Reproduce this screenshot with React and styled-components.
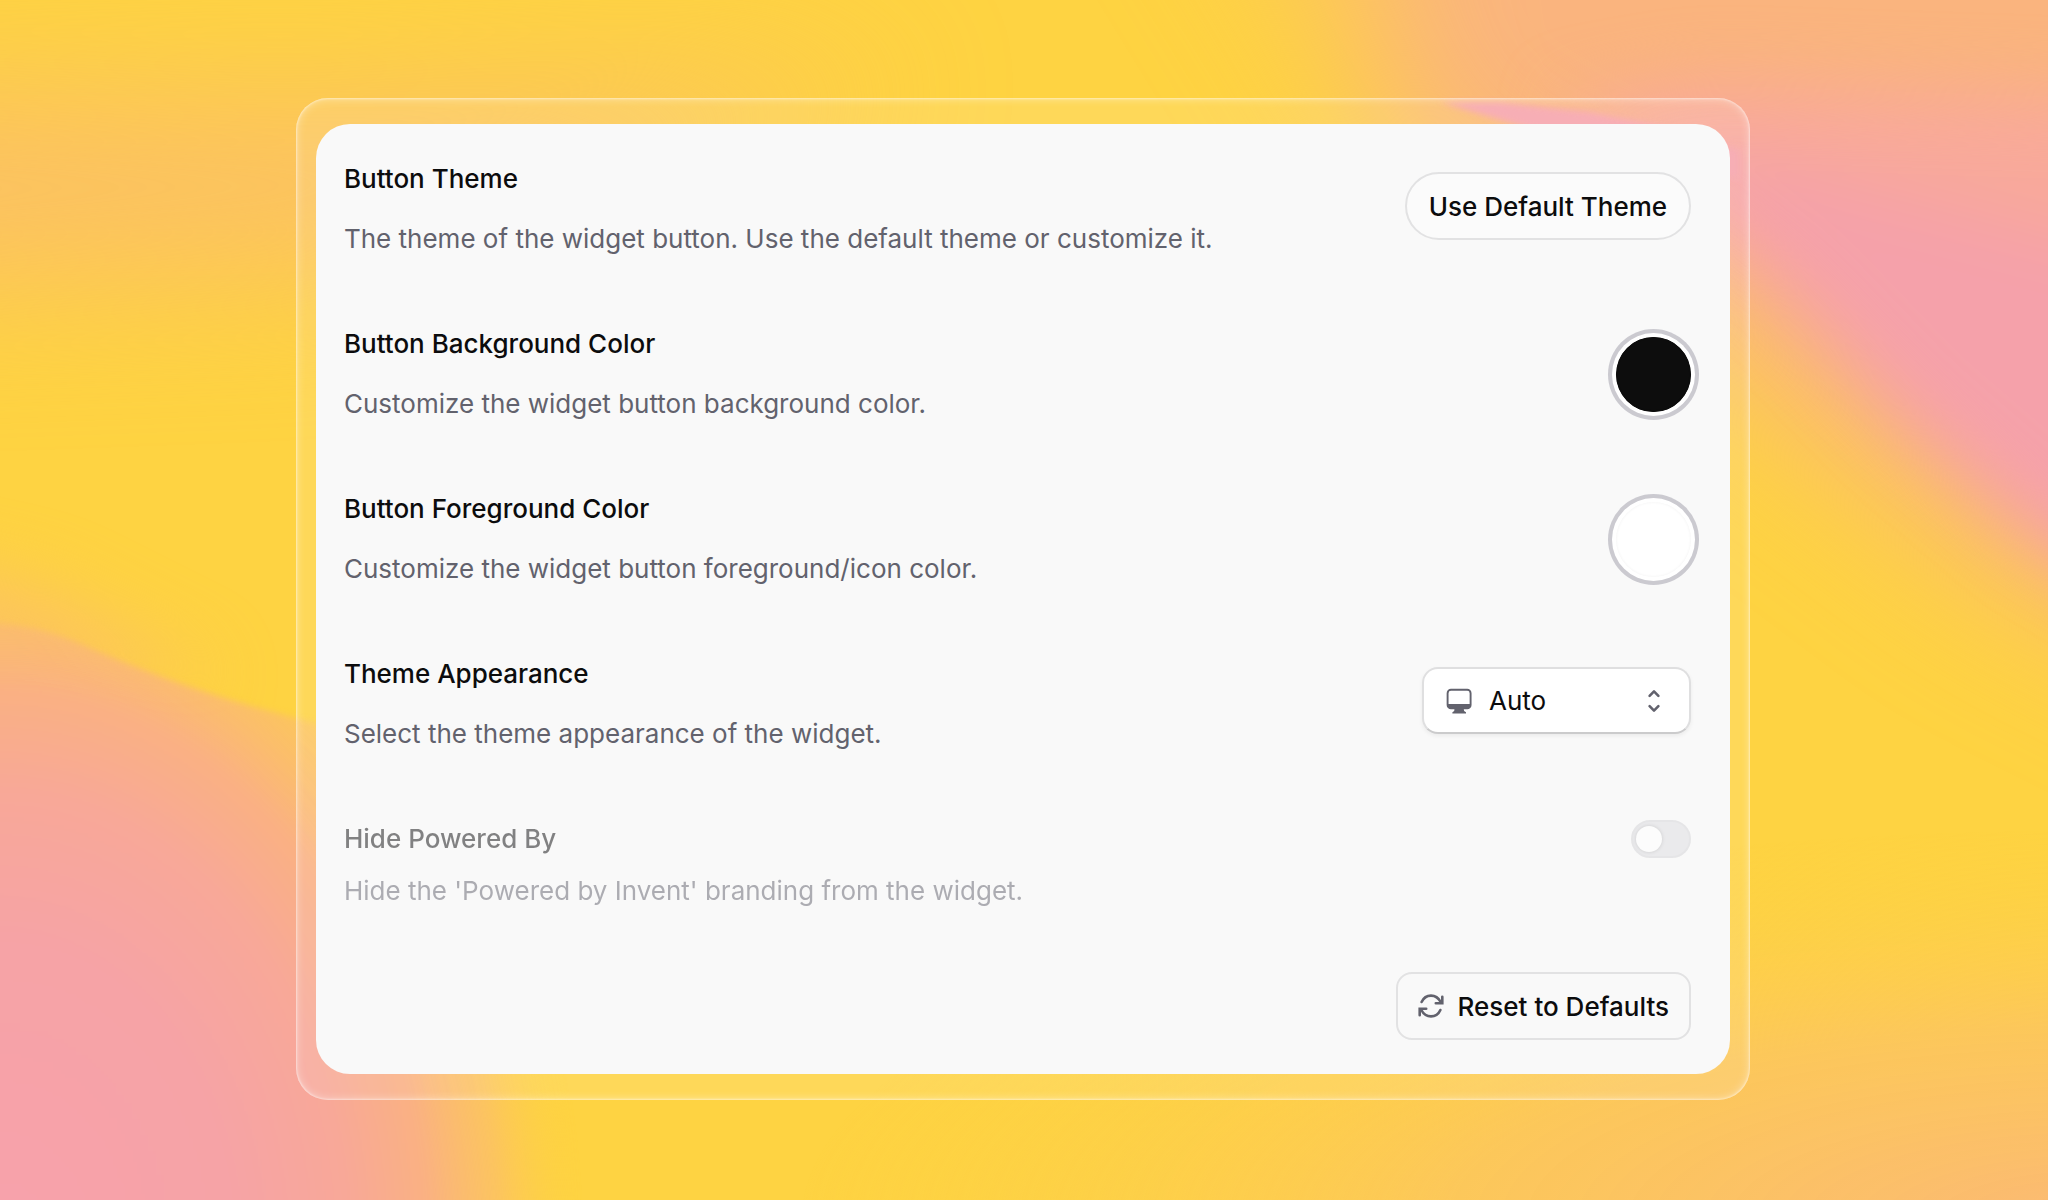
import React, { useState } from 'react';
import styled, { createGlobalStyle } from 'styled-components';

const GlobalStyle = createGlobalStyle`
  * {
    box-sizing: border-box;
  }

  body {
    margin: 0;
    font-family: Inter, 'Liberation Sans', sans-serif;
    color: #0c0c0d;
  }
`;

const Page = styled.main`
  position: relative;
  display: flex;
  align-items: center;
  justify-content: center;
  min-height: 100vh;
  padding: 24px 26px 26px 24px;
  overflow: hidden;
  background: #fed342;
`;

const Backdrop = styled.svg`
  position: absolute;
  inset: 0;
  width: 100%;
  height: 100%;
`;

const Frame = styled.div`
  position: relative;
  width: 71vw;
  min-width: 900px;
  padding: 26px 20px;
  border-radius: 32px;
  background: rgba(255, 255, 255, 0.12);
  box-shadow:
    inset 0 0 2px 1px rgba(255, 255, 255, 0.4),
    inset 0 0 8px 1px rgba(255, 255, 255, 0.4);
`;

const Card = styled.section`
  padding: 36px 39px 34px 28px;
  border-radius: 34px;
  background: #f9f9f9;
`;

const Settings = styled.div`
  display: flex;
  flex-direction: column;
  gap: 67px;
`;

const Row = styled.div`
  display: flex;
  align-items: flex-start;
  justify-content: space-between;
  gap: 24px;
`;

const RowText = styled.div`
  display: flex;
  flex-direction: column;
  gap: 22px;
`;

const Control = styled.div`
  flex-shrink: 0;
  padding-top: 12px;
`;

const Title = styled.label`
  font-size: 26px;
  font-weight: 500;
  line-height: 38px;
`;

const Description = styled.p`
  margin: 0;
  font-size: 26px;
  line-height: 38px;
  color: #62626d;
`;

const DisabledRow = styled.div`
  display: flex;
  flex-direction: column;
  gap: 14px;
  opacity: 0.5;
`;

const DisabledHeader = styled.div`
  display: flex;
  align-items: center;
  justify-content: space-between;
`;

const Button = styled.button`
  display: inline-flex;
  align-items: center;
  gap: 14px;
  height: 68px;
  padding: 0 ${props => (props.$pill ? '22px' : '20px')};
  border: 2px solid #e2e2e3;
  border-radius: ${props => (props.$pill ? '34px' : '16px')};
  background: ${props => (props.$pill ? '#fbfbfb' : '#f9f9f9')};
  color: inherit;
  font-family: inherit;
  font-size: 26px;
  font-weight: 500;
  cursor: pointer;
`;

const Swatch = styled.input`
  appearance: none;
  display: block;
  width: 75px;
  height: 75px;
  padding: 0;
  border: none;
  border-radius: 50%;
  background: ${props => props.value};
  box-shadow:
    inset 0 0 3px rgba(0, 0, 0, 0.06),
    0 0 0 4px #fff,
    0 0 0 8px #cbcad0;
  cursor: pointer;

  &::-webkit-color-swatch-wrapper {
    padding: 0;
  }

  &::-webkit-color-swatch {
    border: none;
    border-radius: 50%;
    box-shadow: inset 0 0 3px rgba(0, 0, 0, 0.06);
  }
`;

const SelectBox = styled.div`
  position: relative;
  display: flex;
  align-items: center;
`;

const Select = styled.select`
  appearance: none;
  width: 269px;
  height: 67px;
  padding: 0 64px 0 65px;
  border: 2px solid #dfdfe0;
  border-bottom-color: #cbcbcc;
  border-radius: 16px;
  background: #fff;
  box-shadow: 0 2px 4px rgba(0, 0, 0, 0.06);
  color: inherit;
  font-family: inherit;
  font-size: 26px;
`;

const SelectIcon = styled.svg`
  position: absolute;
  left: ${props => props.$left};
  right: ${props => props.$right};
  color: #62626d;
  pointer-events: none;
`;

const Switch = styled.input`
  appearance: none;
  display: flex;
  align-items: center;
  width: 60px;
  height: 38px;
  margin: 0;
  padding: 0 3px;
  border: 2px solid #d3d3d6;
  border-radius: 19px;
  background: #dcdce0;

  &::before {
    content: '';
    width: 26px;
    height: 26px;
    border-radius: 50%;
    background: #fff;
    box-shadow: 0 0 3px 1px rgba(0, 0, 0, 0.16);
  }

  &:checked::before {
    margin-left: auto;
  }
`;

const Footer = styled.div`
  display: flex;
  justify-content: flex-end;
  margin-top: 62px;
`;

const MonitorIcon = () => (
  <SelectIcon $left="24px" width="26" height="26" viewBox="0 0 26 26" fill="none" aria-hidden="true">
    <rect x="1.6" y="1.8" width="23" height="18.6" rx="3.4" stroke="currentColor" strokeWidth="1.9" />
    <path d="M1.6 16h23v1.200a3.200 3.200 0 0 1-3.200 3.200H4.800a3.200 3.200 0 0 1-3.200-3.200z" fill="currentColor" />
    <path d="M8.6 20h9l.5 3 1.9 1.2v1.4H6.4v-1.4l1.8-1.2z" fill="currentColor" />
  </SelectIcon>
);

const ChevronsIcon = () => (
  <SelectIcon $right="30px" width="14" height="24" viewBox="0 0 14 24" fill="none" aria-hidden="true">
    <path
      d="M2.6 6.8 7 2.4l4.4 4.4M2.6 17.2 7 21.6l4.4-4.4"
      stroke="currentColor"
      strokeWidth="2.6"
      strokeLinecap="round"
      strokeLinejoin="round"
    />
  </SelectIcon>
);

const RefreshIcon = () => (
  <svg width="26" height="24" viewBox="0 0 26 24" fill="none" stroke="#62626d" strokeWidth="2.6" strokeLinecap="round" aria-hidden="true">
    <path d="M3.6 8C5.4 4 8.8 1.6 13 1.6S20.600 4 22.700 8" />
    <path d="M24.300 2.800v6.400h-6.500" />
    <path d="M22.400 16c-1.800 4-5.200 6.400-9.400 6.400S5.400 20 3.300 16" />
    <path d="M1.700 21.200v-6.400h6.500" />
  </svg>
);

const Wallpaper = () => (
  <Backdrop viewBox="0 0 2048 1200" preserveAspectRatio="none" aria-hidden="true">
    <defs>
      <filter id="wide" x="-50%" y="-50%" width="200%" height="200%" colorInterpolationFilters="sRGB">
        <feGaussianBlur stdDeviation="70" />
      </filter>
      <filter id="mid" x="-50%" y="-50%" width="200%" height="200%" colorInterpolationFilters="sRGB">
        <feGaussianBlur stdDeviation="34" />
      </filter>
      <filter id="edge" x="-20%" y="-20%" width="140%" height="140%" colorInterpolationFilters="sRGB">
        <feGaussianBlur stdDeviation="3" />
      </filter>
      <radialGradient id="coral" gradientUnits="userSpaceOnUse" cx="0" cy="0" r="1" gradientTransform="translate(0 1250) scale(580 760)">
        <stop offset="0" stopColor="#f8a2ac" />
        <stop offset="0.4" stopColor="#f6a3a6" />
        <stop offset="0.6" stopColor="#f8a898" />
        <stop offset="0.74" stopColor="#fab182" />
        <stop offset="0.86" stopColor="#fbc067" stopOpacity="0.8" />
        <stop offset="1" stopColor="#fed342" stopOpacity="0" />
      </radialGradient>
      <radialGradient id="corner" gradientUnits="userSpaceOnUse" cx="0" cy="0" r="1" gradientTransform="translate(2100 1220) scale(1300 390)">
        <stop offset="0" stopColor="#fbb974" />
        <stop offset="0.5" stopColor="#fcc65d" stopOpacity="0.9" />
        <stop offset="1" stopColor="#fed342" stopOpacity="0" />
      </radialGradient>
    </defs>
    <g filter="url(#wide)">
      <path d="M-200 90 300 100 900 80 620 190 360 270-200 290z" fill="#fbc064" />
      <path d="M1180-200H1700V320L1400 160z" fill="#fcc45f" opacity="0.8" />
      <path d="M1380-200H2300V720L2000 570 1800 420 1640 300 1400 160z" fill="#fab47e" />
    </g>
    <rect x="700" y="800" width="1348" height="400" fill="url(#corner)" />
    <g filter="url(#mid)">
      <path d="M-100 560 40 590 220 680-100 680z" fill="#fcc35f" />
      <path d="M1560 110 1700 85 2150 100V600L2040 540 1900 420 1780 295 1650 190z" fill="#f8a99a" />
      <path d="M1640 150 1780 165 1900 195 2150 260V610L2040 535 1900 410 1780 275z" fill="#f5a1aa" />
    </g>
    <g filter="url(#edge)">
      <path d="M1440 102 1500 102 1590 112 1660 126 1740 150 1740 180 1600 150z" fill="#f6a3ab" />
      <path d="M-40 622C20 622 50 630 90 648 150 674 220 700 320 724L620 800V1260H-40z" fill="url(#coral)" />
    </g>
  </Backdrop>
);

const App = () => {
  const [background, setBackground] = useState('#0d0d0d');
  const [foreground, setForeground] = useState('#ffffff');
  const [appearance, setAppearance] = useState('auto');

  const resetDefaults = () => {
    setBackground('#0d0d0d');
    setForeground('#ffffff');
    setAppearance('auto');
  };

  return (
    <Page>
      <GlobalStyle />
      <Wallpaper />
      <Frame>
        <Card>
          <Settings>
            <Row>
              <RowText>
                <Title htmlFor="theme">Button Theme</Title>
                <Description>The theme of the widget button. Use the default theme or customize it.</Description>
              </RowText>
              <Control>
                <Button $pill id="theme" type="button">Use Default Theme</Button>
              </Control>
            </Row>
            <Row>
              <RowText>
                <Title htmlFor="background">Button Background Color</Title>
                <Description>Customize the widget button background color.</Description>
              </RowText>
              <Control>
                <Swatch id="background" type="color" value={background} onChange={(e) => setBackground(e.target.value)} />
              </Control>
            </Row>
            <Row>
              <RowText>
                <Title htmlFor="foreground">Button Foreground Color</Title>
                <Description>Customize the widget button foreground/icon color.</Description>
              </RowText>
              <Control>
                <Swatch id="foreground" type="color" value={foreground} onChange={(e) => setForeground(e.target.value)} />
              </Control>
            </Row>
            <Row>
              <RowText>
                <Title htmlFor="appearance">Theme Appearance</Title>
                <Description>Select the theme appearance of the widget.</Description>
              </RowText>
              <Control>
                <SelectBox>
                  <Select id="appearance" value={appearance} onChange={(e) => setAppearance(e.target.value)}>
                    <option value="auto">Auto</option>
                    <option value="light">Light</option>
                    <option value="dark">Dark</option>
                  </Select>
                  <MonitorIcon />
                  <ChevronsIcon />
                </SelectBox>
              </Control>
            </Row>
            <DisabledRow>
              <DisabledHeader>
                <Title htmlFor="powered">Hide Powered By</Title>
                <Switch id="powered" type="checkbox" disabled />
              </DisabledHeader>
              <Description>Hide the 'Powered by Invent' branding from the widget.</Description>
            </DisabledRow>
          </Settings>
          <Footer>
            <Button type="button" onClick={resetDefaults}>
              <RefreshIcon />
              Reset to Defaults
            </Button>
          </Footer>
        </Card>
      </Frame>
    </Page>
  );
};

export default App;
